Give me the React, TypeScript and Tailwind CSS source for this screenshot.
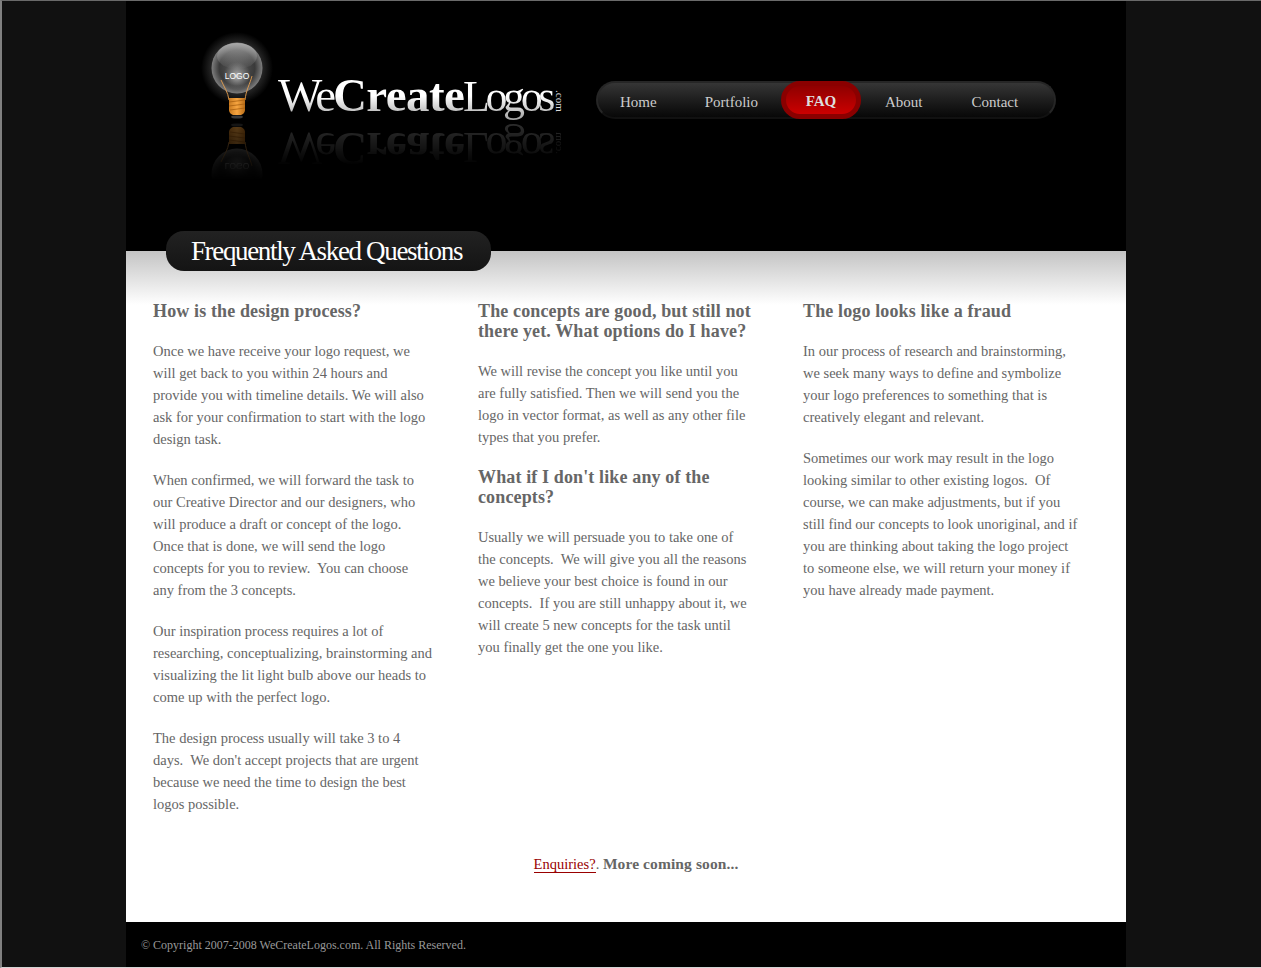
const serif = "font-['Liberation_Serif',serif]";

function Bulb() {
  const body = (
    <>
      <circle cx="47" cy="38" r="25.5" fill="url(#glass)" />
      <ellipse cx="47" cy="26" rx="20" ry="13" fill="url(#shine)" />
      <circle cx="47" cy="46" r="14" fill="url(#core)" />
      <path d="M39 70 C38 62 34 57 31 50 M55 70 C56 60 60 54 62 46" fill="none" stroke="#e8a050" strokeWidth="0.9" />
      <text x="47" y="49" textAnchor="middle" fontSize="8.5" fontFamily="Liberation Sans, sans-serif" fill="#fff">LOGO</text>
      <path d="M39 68 H55 V80 C55 83 52 85 50 85 H44 C42 85 39 83 39 80 Z" fill="url(#base)" />
      <path d="M39 72 L55 70 M39 76 L55 74 M40 80 L55 78" stroke="#a85f10" strokeWidth="0.8" />
      <ellipse cx="47" cy="87" rx="6" ry="1.6" fill="#3a3a3a" />
    </>
  );
  return (
    <svg width="96" height="150" viewBox="0 0 96 150" className="shrink-0">
      <defs>
        <radialGradient id="glow" cx="50%" cy="50%" r="50%">
          <stop offset="65%" stopColor="#2c2c2c" />
          <stop offset="100%" stopColor="#000" />
        </radialGradient>
        <radialGradient id="glass" cx="50%" cy="50%" r="50%">
          <stop offset="0%" stopColor="#5a5a5a" />
          <stop offset="70%" stopColor="#3a3a3a" />
          <stop offset="100%" stopColor="#7e7e7e" />
        </radialGradient>
        <linearGradient id="shine" x1="0" x2="0" y1="0" y2="1">
          <stop offset="0%" stopColor="#b0b0b0" stopOpacity="0.9" />
          <stop offset="100%" stopColor="#888" stopOpacity="0.05" />
        </linearGradient>
        <radialGradient id="core" cx="50%" cy="50%" r="50%">
          <stop offset="0%" stopColor="#d8d8d8" stopOpacity="0.75" />
          <stop offset="100%" stopColor="#999" stopOpacity="0" />
        </radialGradient>
        <linearGradient id="base" x1="0" x2="1" y1="0" y2="0">
          <stop offset="0%" stopColor="#c87a20" />
          <stop offset="50%" stopColor="#f7a540" />
          <stop offset="100%" stopColor="#b86c18" />
        </linearGradient>
        <linearGradient id="fade" x1="0" x2="0" y1="0" y2="1">
          <stop offset="0%" stopColor="#fff" stopOpacity="0.4" />
          <stop offset="100%" stopColor="#fff" stopOpacity="0" />
        </linearGradient>
        <mask id="fm" maskUnits="userSpaceOnUse" x="0" y="90" width="96" height="60">
          <rect x="0" y="90" width="96" height="60" fill="url(#fade)" />
        </mask>
      </defs>
      <circle cx="47" cy="38" r="36" fill="url(#glow)" />
      {body}
      <g mask="url(#fm)">
        <g transform="translate(0 182) scale(1 -1)">{body}</g>
      </g>
    </svg>
  );
}

function LogoWord({ className = "" }: { className?: string }) {
  return (
    <div className={`flex items-baseline text-[47px] leading-[50px] whitespace-nowrap ${serif} ${className}`}>
      <span className="w-[55px] tracking-[-3.4px]">We</span>
      <b className="w-[130px] font-bold tracking-[-0.6px]">Create</b>
      <span className="w-[90px] text-[44px] tracking-[-4.4px]">Logos</span>
    </div>
  );
}

const nav = ["Home", "Portfolio", "FAQ", "About", "Contact"];

function Nav() {
  return (
    <nav className={`flex h-[38px] w-[460px] items-center rounded-[19px] border-2 border-[#262626] border-b-[#111111] bg-gradient-to-b from-[#363636] to-[#080808] ${serif}`}>
      {nav.map((n) =>
        n === "FAQ" ? (
          <a key={n} className="-my-[2px] -ml-[1px] flex h-[38px] w-[80px] items-center justify-center rounded-[19px] border-[5px] border-[#8a0000] bg-gradient-to-b from-[#8f0000] to-[#cc0000] pt-[2px] text-[15px] font-bold text-[#ddd]">
            {n}
          </a>
        ) : (
          <a key={n} className="px-[24px] pt-[5px] text-[15px] text-[#ccc] first:pl-[22px] last:pl-[25px]">
            {n}
          </a>
        )
      )}
    </nav>
  );
}

const cols: { h: string[]; p: string[] }[][] = [
  [
    {
      h: ["How is the design process?"],
      p: [
        "Once we have receive your logo request, we|will get back to you within 24 hours and|provide you with timeline details. We will also|ask for your confirmation to start with the logo|design task.",
        "When confirmed, we will forward the task to|our Creative Director and our designers, who|will produce a draft or concept of the logo.|Once that is done, we will send the logo|concepts for you to review.  You can choose|any from the 3 concepts.",
        "Our inspiration process requires a lot of|researching, conceptualizing, brainstorming and|visualizing the lit light bulb above our heads to|come up with the perfect logo.",
        "The design process usually will take 3 to 4|days.  We don't accept projects that are urgent|because we need the time to design the best|logos possible.",
      ],
    },
  ],
  [
    {
      h: ["The concepts are good, but still not", "there yet. What options do I have?"],
      p: ["We will revise the concept you like until you|are fully satisfied. Then we will send you the|logo in vector format, as well as any other file|types that you prefer."],
    },
    {
      h: ["What if I don't like any of the", "concepts?"],
      p: ["Usually we will persuade you to take one of|the concepts.  We will give you all the reasons|we believe your best choice is found in our|concepts.  If you are still unhappy about it, we|will create 5 new concepts for the task until|you finally get the one you like."],
    },
  ],
  [
    {
      h: ["The logo looks like a fraud"],
      p: [
        "In our process of research and brainstorming,|we seek many ways to define and symbolize|your logo preferences to something that is|creatively elegant and relevant.",
        "Sometimes our work may result in the logo|looking similar to other existing logos.  Of|course, we can make adjustments, but if you|still find our concepts to look unoriginal, and if|you are thinking about taking the logo project|to someone else, we will return your money if|you have already made payment.",
      ],
    },
  ],
];

export default function App() {
  return (
    <div className={`h-[968px] w-[1261px] overflow-hidden border-t border-b border-l-2 border-t-[#6a6a6a] border-b-[#d4d4d4] border-l-[#808080] bg-[#111111] ${serif}`}>
      <div className="ml-[124px] flex h-full w-[1000px] flex-col">
        <header className="relative h-[250px] shrink-0 bg-black">
          <div className="flex items-start">
            <div className="ml-[64px] mt-[29px]">
              <Bulb />
            </div>
            <div className="relative ml-[-8px] mt-[69px] w-[318px] shrink-0">
              <LogoWord className="bg-gradient-to-b from-white via-white to-[#9a9a9a] bg-clip-text text-transparent" />
              <span className="absolute left-[287px] top-[20px] origin-top-left rotate-90 text-[11px] leading-none text-[#ddd]">.com</span>
              <div className="relative -scale-y-100 opacity-25 [mask-image:linear-gradient(to_top,black,transparent_85%)]">
                <LogoWord className="text-[#bbb]" />
                <span className="absolute left-[287px] top-[20px] origin-top-left rotate-90 text-[11px] leading-none text-[#bbb]">.com</span>
              </div>
            </div>
            <div className="mt-[80px]">
              <Nav />
            </div>
          </div>
          <h1 className="absolute left-[40px] top-[230px] flex h-[40px] w-[325px] items-center justify-center rounded-[18px] bg-gradient-to-b from-[#222222] to-[#141414] pr-[4px] text-[27px] leading-none tracking-[-1.34px] text-white">
            Frequently Asked Questions
          </h1>
        </header>
        <main className="h-[671px] shrink-0 bg-gradient-to-b from-[#c4c4c4] via-white via-[8%] to-white pt-[50px] pl-[27px]">
          <div className="grid h-[502px] grid-cols-[325px_325px_325px] text-[#666666]">
            {cols.map((col, i) => (
              <div key={i}>
                {col.map((b, j) => (
                  <section key={j}>
                    <h2 className="mb-[19px] text-[18px] leading-[20px] font-bold tracking-[0.13px]">
                      {b.h.map((l) => (
                        <div key={l} className="whitespace-nowrap">{l}</div>
                      ))}
                    </h2>
                    {b.p.map((para, k) => (
                      <p key={k} className="mb-[19px] text-[14.5px] leading-[22px] whitespace-pre">
                        {para.split("|").map((l) => (
                          <span key={l} className="block">{l}</span>
                        ))}
                      </p>
                    ))}
                  </section>
                ))}
              </div>
            ))}
          </div>
          <p className="mt-[50px] pr-[7px] text-center text-[14.5px] leading-[22px] text-[#666666]">
            <a className="border-b border-[#990000] text-[#990000]">Enquiries?</a>. <b className="text-[15.5px] tracking-[0.1px]">More coming soon...</b>
          </p>
        </main>
        <footer className="flex h-[45px] shrink-0 items-center bg-black px-[15px] text-[12px] text-[#999999]">
          © Copyright 2007-2008 WeCreateLogos.com. All Rights Reserved.
        </footer>
      </div>
    </div>
  );
}
